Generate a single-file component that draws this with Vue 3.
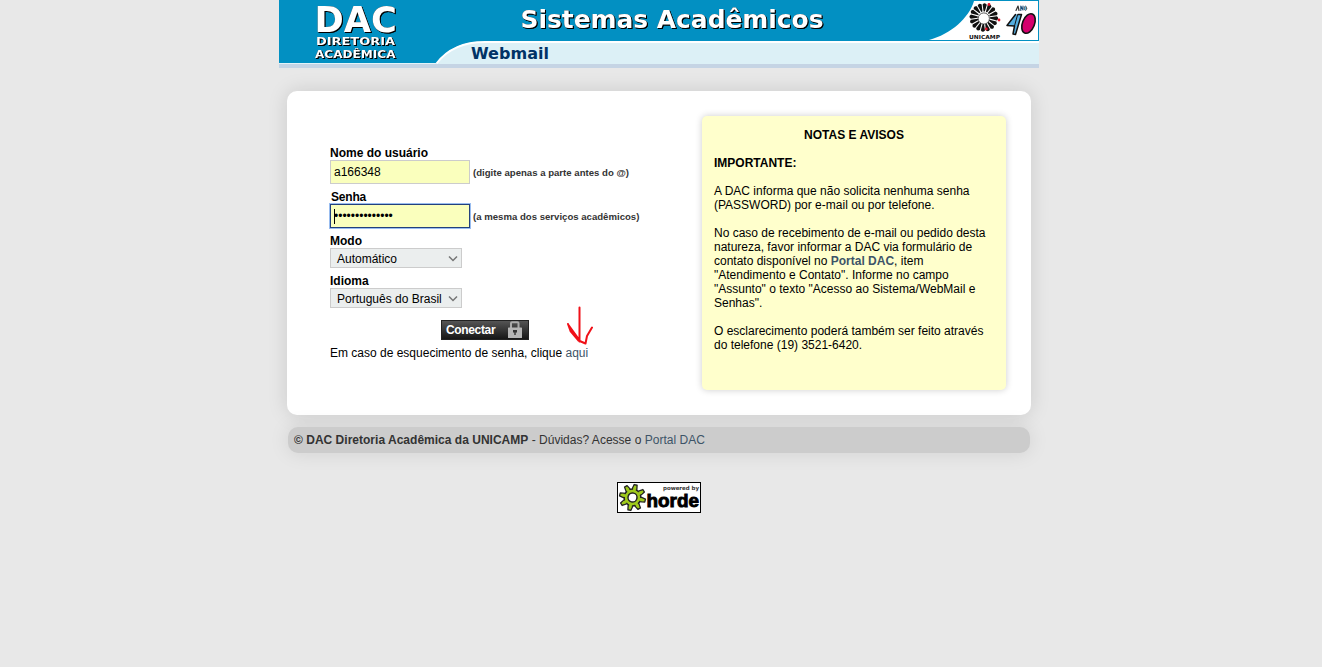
<script setup>
const gearTeeth = [0, 45, 90, 135, 180, 225, 270, 315]
const petals = Array.from({ length: 16 }, (_, i) => i * 22.5 + 4)
const password = '•'.repeat(14)
</script>

<template>
  <div class="page">
    <header class="banner">
      <svg width="760" height="68" viewBox="0 0 760 68">
        <rect width="760" height="64" fill="#0290c2" />
        <path d="M157 64C167 51 179 42 204 42H760V64Z" fill="#dcf0f6" />
        <path d="M157.500 63.500C167 51 181 42 206 42H760" fill="none" stroke="#fff" stroke-width="2" />
        <path d="M0 63.500H158" stroke="#e4f3f8" stroke-width="1" />
        <rect y="64" width="760" height="4" fill="#c5d4e4" />
        <path d="M650 40C672 34 690 18 695 1H759V40Z" fill="#fff" />
        <path d="M650 40.500H759.500V0M690 .5H759.500" fill="none" stroke="#0290c2" />
        <g class="raised">
          <text x="35.500" y="32" class="dac" textLength="82.500" lengthAdjust="spacingAndGlyphs">DAC</text>
          <text x="37" y="45" class="unit" textLength="79" lengthAdjust="spacingAndGlyphs">DIRETORIA</text>
          <text x="36" y="58" class="unit" textLength="80.500" lengthAdjust="spacingAndGlyphs">ACADÊMICA</text>
          <text x="241.500" y="28" class="title" textLength="303" lengthAdjust="spacingAndGlyphs">Sistemas Acadêmicos</text>
        </g>
        <text x="192" y="59" class="section" textLength="78" lengthAdjust="spacingAndGlyphs">Webmail</text>

        <g transform="translate(704.800 17.500)">
          <path v-for="a in petals" :key="a" d="M-.6 -6L-2.100 -13Q0 -15.800 2.100 -13L.6 -6Z" fill="#111" :transform="`rotate(${a})`" />
          <circle cy="1" r="5.600" fill="#fff" stroke="#333" stroke-width=".8" />
          <g fill="#e3122a"><circle cx="5.200" cy="-13" r="1.400" /><circle cx="15.200" cy="2.500" r="1.400" /><circle cx="2.500" cy="11.500" r="1.400" /></g>
        </g>
        <text x="690" y="39" class="uni" textLength="31" lengthAdjust="spacingAndGlyphs">UNICAMP</text>
        <g stroke-linejoin="round" stroke-linecap="round">
          <path d="M736.500 14.500L728 25.500L735.500 26L734 34L736.500 34.500L742.500 14.500L739 14.500" fill="#54aee0" stroke="#111" stroke-width="1.500" />
          <path d="M735.500 26L738.500 15" fill="none" stroke="#111" stroke-width="1" />
          <ellipse cx="749.500" cy="23.500" rx="6" ry="10.200" transform="rotate(22 749.500 23.500)" fill="#d5006d" stroke="#111" stroke-width="1.600" />
          <path d="M737 10.500L739 6L740 10.500" fill="none" stroke="#333" stroke-width="1.200" />
          <path d="M741.800 10.500V6L744 10V6" fill="none" stroke="#1a4e7a" stroke-width="1.100" />
          <ellipse cx="746.500" cy="8.300" rx="1.200" ry="2.200" fill="#63b5dc" stroke="#555" stroke-width=".8" />
        </g>
      </svg>
    </header>

    <main class="card">
      <section class="login">
        <label>Nome do usuário</label>
        <div class="row"><div class="field">a166348</div><small>(digite apenas a parte antes do @)</small></div>
        <label class="shift">Senha</label>
        <div class="row"><div class="field focus"><i class="caret"></i><span class="dots">{{ password }}</span></div><small>(a mesma dos serviços acadêmicos)</small></div>
        <label>Modo</label>
        <div class="select"><span>Automático</span><svg width="10" height="6" viewBox="0 0 10 6"><path d="M1 .5L5 4.500L9 .5" /></svg></div>
        <label>Idioma</label>
        <div class="select"><span>Português do Brasil</span><svg width="10" height="6" viewBox="0 0 10 6"><path d="M1 .5L5 4.500L9 .5" /></svg></div>
        <button class="connect" type="button">
          <span>Conectar</span>
          <svg width="16" height="18" viewBox="0 0 16 18">
            <path d="M4 8V2.200Q4 1.200 5 1.200H10.500Q11.500 1.200 11.500 2.200V8" fill="none" stroke="#aaa" stroke-width="2" />
            <rect x="1" y="6.500" width="14" height="10.500" rx=".6" fill="#b5b5b5" />
            <path d="M6 9H10V11.500H8.700V14H7.300V11.500H6Z" fill="#333" />
          </svg>
        </button>
        <p class="forgot">Em caso de esquecimento de senha, clique <a>aqui</a></p>
        <svg class="arrow" width="28" height="40" viewBox="0 0 28 40"><path d="M12.500 1.500V35.500M1 18L3.500 25L11.500 34.500L18.500 37.500L20 30L25 21.500M1.500 19L12 33.500" /></svg>
      </section>

      <aside class="notes">
        <h2>NOTAS E AVISOS</h2>
        <p><b>IMPORTANTE:</b></p>
        <p>A DAC informa que não solicita nenhuma senha<br>(PASSWORD) por e-mail ou por telefone.</p>
        <p>No caso de recebimento de e-mail ou pedido desta<br>natureza, favor informar a DAC via formulário de<br>contato disponível no <a><b>Portal DAC</b></a>, item<br>"Atendimento e Contato". Informe no campo<br>"Assunto" o texto "Acesso ao Sistema/WebMail e<br>Senhas".</p>
        <p>O esclarecimento poderá também ser feito através<br>do telefone (19) 3521-6420.</p>
      </aside>
    </main>

    <footer class="foot"><span><b>© DAC Diretoria Acadêmica da UNICAMP</b> - Dúvidas? Acesse o <a>Portal DAC</a></span></footer>

    <svg class="horde" width="84" height="31" viewBox="0 0 84 31">
      <rect x=".5" y=".5" width="83" height="30" fill="#fff" stroke="#000" />
      <g transform="translate(15.500 15.500) rotate(14)">
        <g fill="#9fca1c" stroke="#222" stroke-width="1.300" stroke-linejoin="round">
          <path v-for="a in gearTeeth" :key="a" d="M-2.600 -7L-1.500 -13H1.500L2.600 -7Z" :transform="`rotate(${a})`" />
          <circle r="8.300" />
        </g>
        <path v-for="a in gearTeeth" :key="a" d="M-1.700 -6L-1 -11H1L1.700 -6Z" fill="#9fca1c" :transform="`rotate(${a})`" />
        <circle r="4.500" fill="#fff" stroke="#222" stroke-width="1.500" />
      </g>
      <text x="46" y="8" class="powered" textLength="36" lengthAdjust="spacingAndGlyphs">powered by</text>
      <text x="29.500" y="25" class="hordename" textLength="52.500" lengthAdjust="spacingAndGlyphs">horde</text>
    </svg>
  </div>
</template>

<style>
html, body { background: #e8e8e8; }
</style>

<style scoped>
.page {
  width: 1318px;
  min-height: 667px;
  display: flex;
  flex-direction: column;
  align-items: center;
  font: 12px/14px "Liberation Sans", Arial, sans-serif;
  color: #000;
}
.page * { box-sizing: border-box; }
svg { display: block; }
a { color: #3d5468; }
p { margin: 0; }
.banner { height: 68px; }
.raised { fill: #fff; filter: drop-shadow(1px 1px .4px #000) drop-shadow(.5px .5px 0 #111); }
.dac { font: bold 35px "DejaVu Sans", sans-serif; }
.unit { font: bold 11px "DejaVu Sans", sans-serif; }
.title { font: bold 25px "DejaVu Sans", sans-serif; }
.section { font: bold 16.500px "DejaVu Sans", sans-serif; fill: #003366; }
.uni { font: bold 5.500px "DejaVu Sans", sans-serif; fill: #111; }
.card {
  width: 744px;
  height: 324px;
  margin-top: 23px;
  padding: 25px 25px 0 43px;
  background: #fff;
  border-radius: 10px;
  box-shadow: 0 0 20px rgba(0, 0, 0, .13);
  display: flex;
  justify-content: space-between;
}
.login { position: relative; padding-top: 30px; display: flex; flex-direction: column; align-items: flex-start; }
label { font-weight: bold; height: 14px; white-space: nowrap; }
.shift { padding-left: 1px; letter-spacing: -.2px; }
.row { display: flex; align-items: center; gap: 3px; margin-bottom: 6px; }
small { font-size: 9.600px; font-weight: bold; color: #333; white-space: nowrap; padding-top: 2px; }
.field {
  width: 140px;
  height: 24px;
  padding-left: 3px;
  border: 1px solid #ccc;
  background: #faffbd;
  display: flex;
  align-items: center;
}
.focus { border-color: #24417c; box-shadow: 0 0 0 1px #99bdf0; padding-left: 3px; }
.caret { width: 1px; height: 15px; margin-right: -1px; background: #000; }
.select {
  width: 132px;
  height: 20px;
  margin-bottom: 6px;
  padding: 1px 3px 0 6px;
  border: 1px solid #ccc;
  background: #ebeeee;
  display: flex;
  align-items: center;
  justify-content: space-between;
}
.select span { white-space: nowrap; }
.select path { fill: none; stroke: #777; stroke-width: 1.500; }
.connect {
  width: 88px;
  height: 20px;
  margin: 6px 0 6px 111px;
  padding: 0 5px 0 4px;
  border: 1px solid #222;
  background: linear-gradient(#555, #161616);
  color: #fff;
  font: bold 12px/14px "Liberation Sans", Arial, sans-serif;
  letter-spacing: -.35px;
  display: flex;
  align-items: center;
  justify-content: space-between;
}
.forgot { white-space: nowrap; }
.arrow { position: absolute; left: 237px; top: 190px; }
.arrow path { fill: none; stroke: #f01018; stroke-width: 2; stroke-linecap: round; stroke-linejoin: round; }
.notes {
  width: 304px;
  height: 274px;
  padding: 12px;
  background: #ffffcc;
  border-radius: 5px;
  box-shadow: 0 0 7px rgba(0, 0, 0, .2);
  white-space: nowrap;
}
.notes h2 { margin: 0; font-size: 12px; line-height: 14px; text-align: center; }
.notes p { margin-top: 14px; }
.foot {
  width: 742px;
  height: 26px;
  margin-top: 12px;
  padding-left: 6px;
  border-radius: 10px;
  background: #ccc;
  box-shadow: 0 0 20px rgba(0, 0, 0, .1);
  color: #333;
  letter-spacing: .015px;
  display: flex;
  align-items: center;
}
.horde { margin-top: 29px; }
.powered { font: bold 5.500px "DejaVu Sans", sans-serif; fill: #333; }
.hordename { font: bold 19px "Liberation Sans", sans-serif; fill: #000; stroke: #000; stroke-width: .9; }
</style>
